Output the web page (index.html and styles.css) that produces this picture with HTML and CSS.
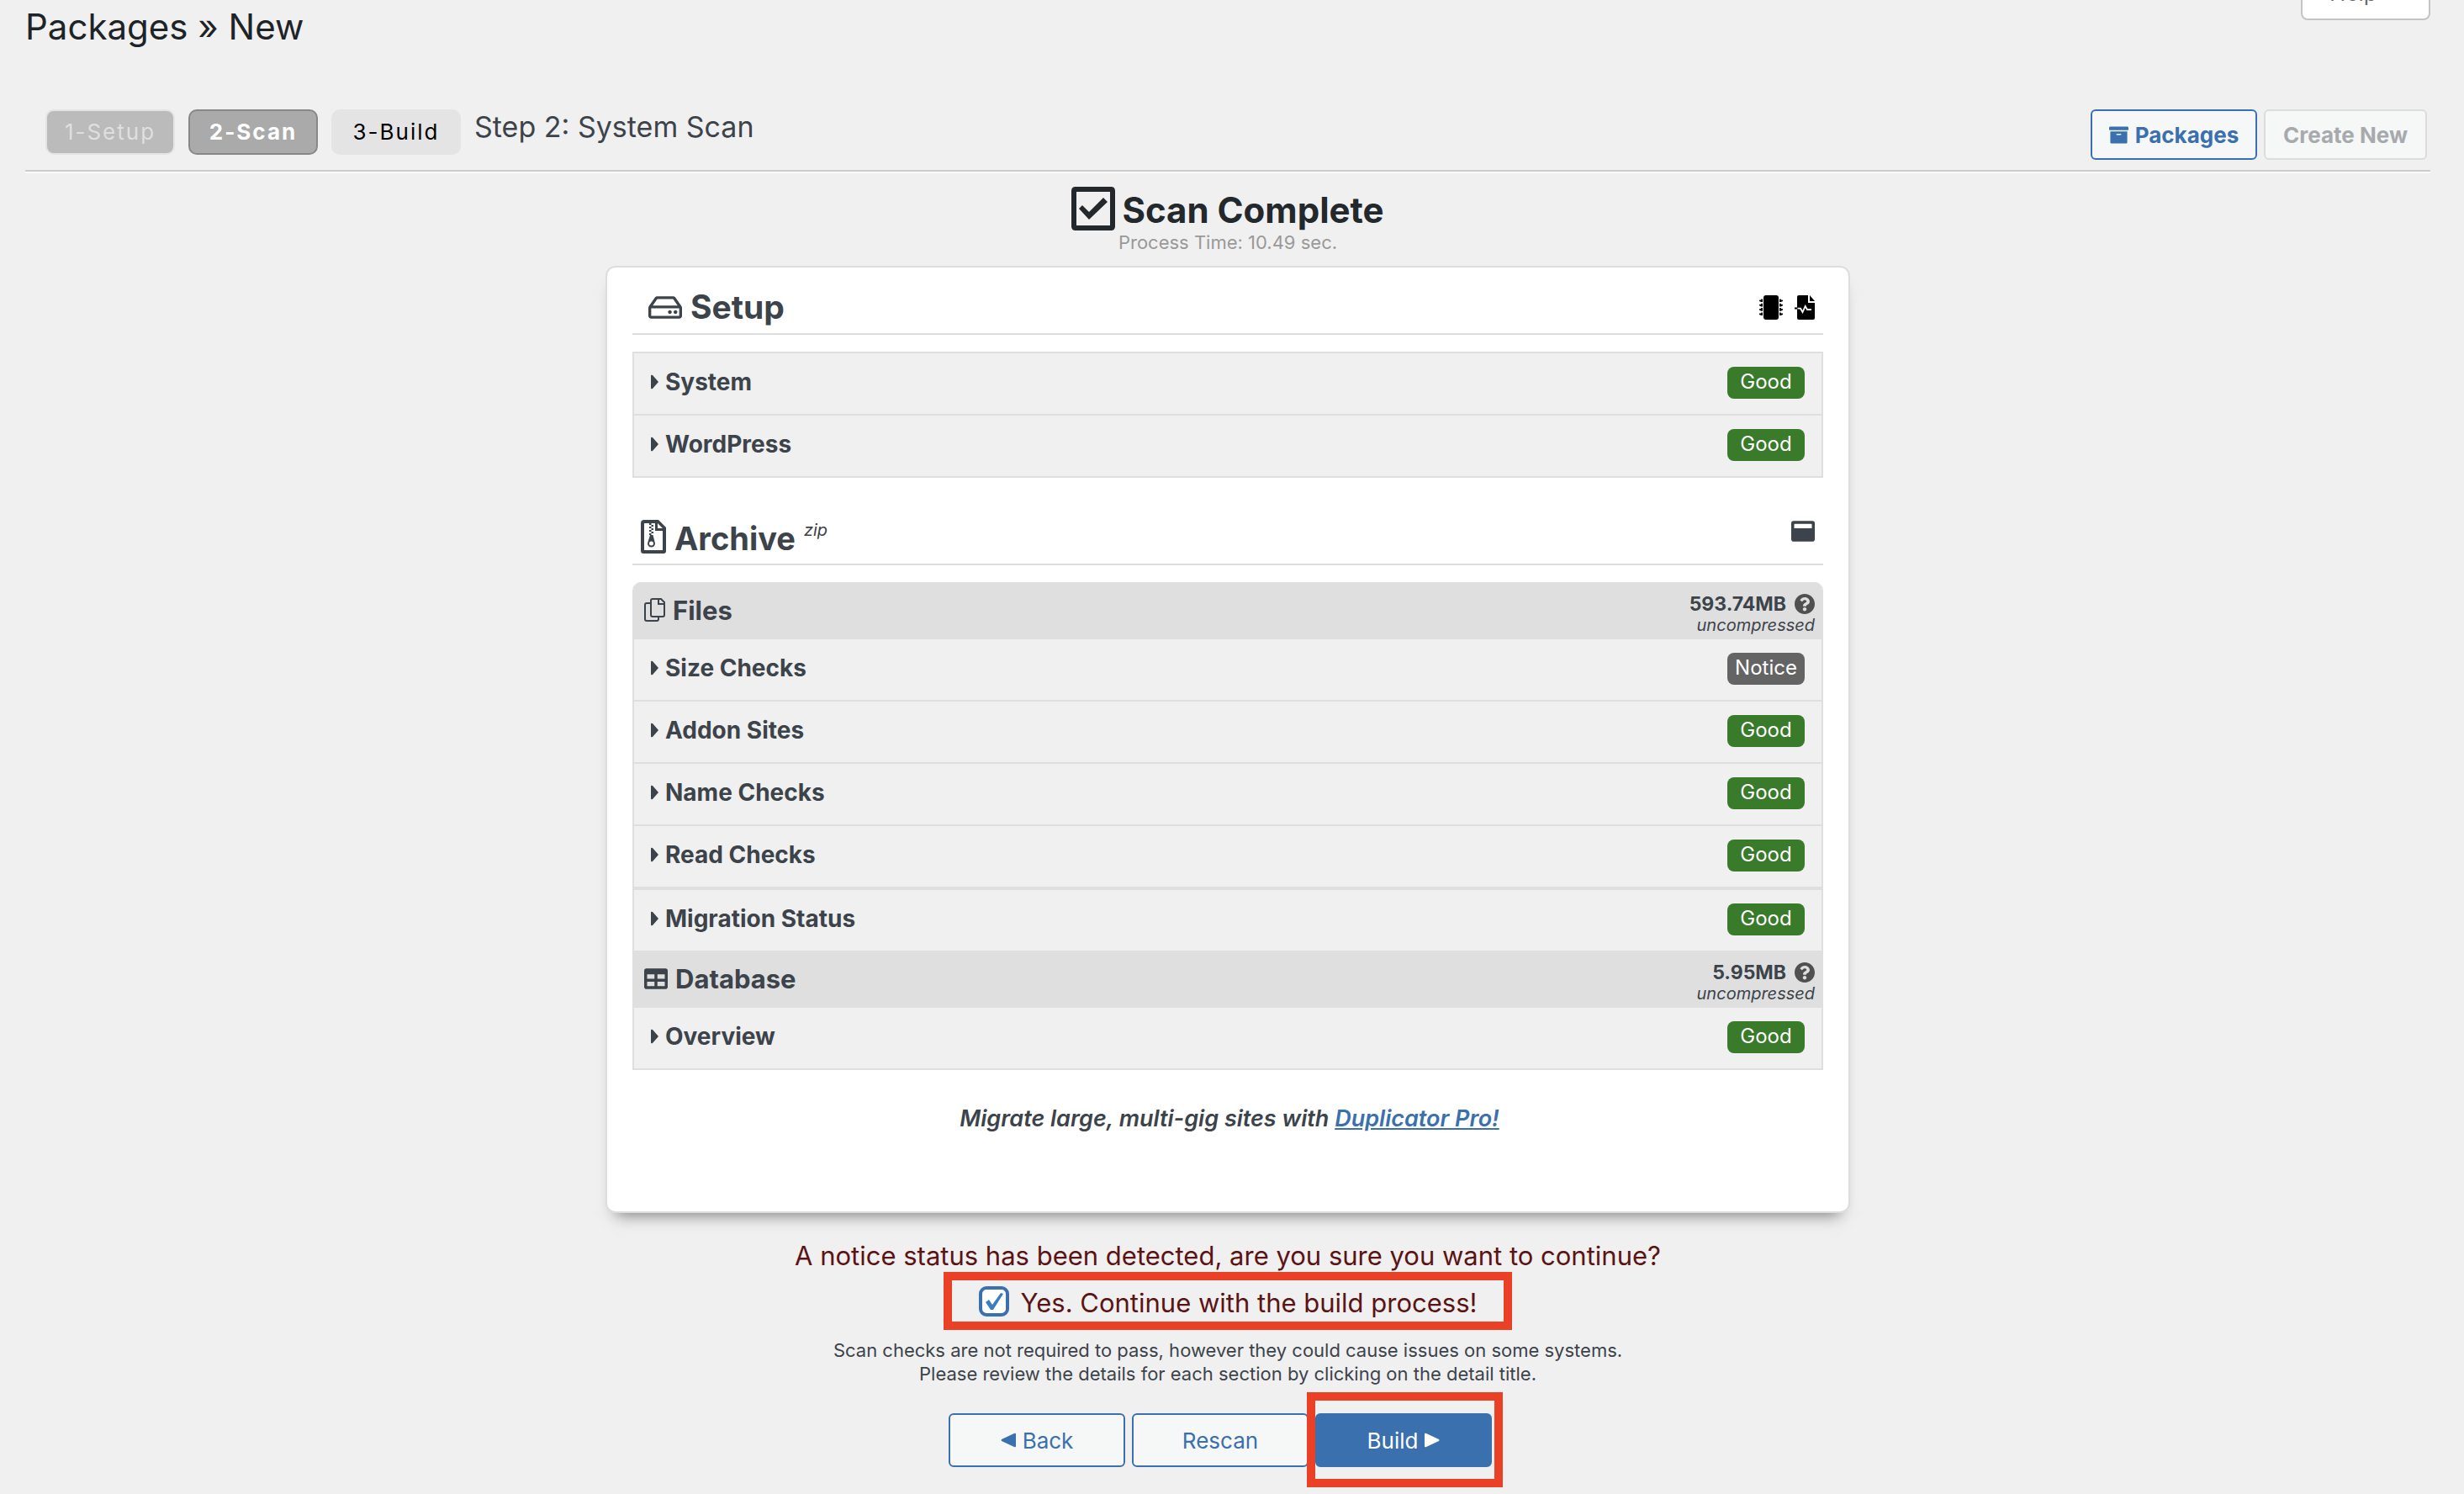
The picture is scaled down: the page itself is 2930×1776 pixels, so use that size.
FILE: index.html
```html
<!DOCTYPE html>
<html lang="en">
<head>
<meta charset="utf-8">
<title>Packages » New</title>
<link rel="stylesheet" href="styles.css">
</head>
<body>
<svg class="defs" aria-hidden="true">
  <symbol id="caret" viewBox="0 0 9 18"><path d="M0 2Q0 0 2 1L9 9 2 17Q0 18 0 16Z"/></symbol>
  <symbol id="help" viewBox="8 8 496 496"><path d="M504 256c0 136.997-111.043 248-248 248S8 392.997 8 256C8 119.083 119.043 8 256 8s248 111.083 248 248zM262.655 90c-54.497 0-89.255 22.957-116.549 63.758-3.536 5.286-2.353 12.415 2.715 16.258l34.699 26.31c5.205 3.947 12.621 3.008 16.665-2.122 17.864-22.658 30.113-35.797 57.303-35.797 20.429 0 45.698 13.148 45.698 32.958 0 14.976-12.363 22.667-32.534 33.976C247.128 238.528 216 254.941 216 296v4c0 6.627 5.373 12 12 12h56c6.627 0 12-5.373 12-12v-1.333c0-28.462 83.186-29.647 83.186-106.667 0-58.002-60.165-102-116.531-102zM256 338c-25.365 0-46 20.635-46 46 0 25.364 20.635 46 46 46s46-20.636 46-46c0-25.365-20.635-46-46-46z"/></symbol>
</svg>

<header class="page-head">
  <h1>Packages » New</h1>
  <button class="help-tab" type="button">Help</button>
</header>

<nav class="toolbar">
  <div class="steps">
    <span class="step step-done">1-Setup</span>
    <span class="step step-active">2-Scan</span>
    <span class="step">3-Build</span>
    <span class="step-title">Step 2: System Scan</span>
  </div>
  <div class="tools">
    <a class="tool" href="#packages"><svg width="23" height="21" viewBox="0 32 512 448"><path d="M32 448c0 17.700 14.300 32 32 32h384c17.700 0 32-14.300 32-32V160H32v288zm160-212c0-6.600 5.400-12 12-12h104c6.600 0 12 5.400 12 12v8c0 6.600-5.400 12-12 12H204c-6.600 0-12-5.400-12-12v-8zM480 32H32C14.300 32 0 46.300 0 64v48c0 8.800 7.200 16 16 16h480c8.800 0 16-7.200 16-16V64c0-17.700-14.300-32-32-32z"/></svg>Packages</a>
    <button class="tool" type="button" disabled>Create New</button>
  </div>
</nav>

<main>
  <div class="result">
    <h2><svg width="52" height="52" viewBox="0 0 52 52"><path fill-rule="evenodd" d="M5 0H47Q52 0 52 5V47Q52 52 47 52H5Q0 52 0 47V5Q0 0 5 0ZM6 6V46H46V6ZM9 26L13 22 21 30 38 13 43 18 21 39Z"/></svg><span>Scan Complete</span></h2>
    <p>Process Time: 10.49 sec.</p>
  </div>

  <section class="card">
    <div class="group-head group-setup">
      <h3><svg width="40" height="27" viewBox="0 64 576 384"><path d="M567.403 235.642L462.323 84.589A48 48 0 0 0 422.919 64H153.081a48 48 0 0 0-39.404 20.589L8.597 235.642A48.001 48.001 0 0 0 0 263.054V400c0 26.510 21.490 48 48 48h480c26.510 0 48-21.490 48-48V263.054c0-9.801-3-19.366-8.597-27.412zM153.081 112h269.838l77.913 112H75.168l77.913-112zM528 400H48V272h480v128zm-32-64c0 17.673-14.327 32-32 32s-32-14.327-32-32 14.327-32 32-32 32 14.327 32 32zm-96 0c0 17.673-14.327 32-32 32s-32-14.327-32-32 14.327-32 32-32 32 14.327 32 32z"/></svg>Setup</h3>
      <div class="group-icons dark">
        <svg width="28" height="29" viewBox="0 0 28 29"><rect x="5" y="0" width="18" height="29" rx="3"/><path d="M4 4.500v3.600H2.500L0 7V5.700L2 5.500 2.500 4.500ZM4 9.800v3.600H2.500L0 12.300V11L2 10.800 2.500 9.800ZM4 15.100v3.600H2.500L0 17.600v-1.300l2-.2.500-1ZM4 20.400V24H2.500L0 22.900v-1.300l2-.2.500-1ZM24 4.500v3.600h1.500L28 7V5.700l-2-.2-.5-1ZM24 9.800v3.600h1.500L28 12.300V11l-2-.2-.5-1ZM24 15.100v3.600h1.500l2.500-1.100v-1.300l-2-.2-.5-1ZM24 20.400V24h1.500l2.500-1.100v-1.300l-2-.2-.5-1Z"/></svg>
        <svg width="24" height="29" viewBox="0 0 24 29"><path d="M5 0H16V9H24V27Q24 29 22 29H5Q3 29 3 27V2Q3 0 5 0ZM18 0L24 7H18Z"/><path d="M0 15.500H4" stroke="#000" stroke-width="2"/><path class="line" d="M3.500 15.700H7L9.500 20 12.700 13 15 17H20" stroke="#fff" stroke-width="1.800"/></svg>
      </div>
    </div>
    <div class="checks">
      <div class="row"><button type="button"><svg width="9" height="18"><use href="#caret"/></svg>System</button><span class="badge">Good</span></div>
      <div class="row"><button type="button"><svg width="9" height="18"><use href="#caret"/></svg>WordPress</button><span class="badge">Good</span></div>
    </div>

    <div class="group-head group-archive">
      <h3><svg width="30" height="40" viewBox="0 0 30 40"><path fill-rule="evenodd" d="M4 0H21L30 9V37Q30 40 27 40H3Q0 40 0 37V4Q0 0 4 0ZM4 4V36H26V13H17V4ZM20 4V10H26Z"/><path d="M10 4h2.500v2H10zM12.500 6H15v2h-2.500zM10 8h2.500v2H10zM12.500 10H15v2h-2.500zM10 12h2.500v2H10zM12.500 14H15v2h-2.500zM10 16h2.500v2H10z"/><path fill-rule="evenodd" d="M11 18H14.500L17 28A4.500 4.500 0 1 1 8 28ZM12.500 25.500A2.500 2.500 0 1 0 12.500 30.500 2.500 2.500 0 1 0 12.500 25.500Z"/></svg><span>Archive</span><sup>zip</sup></h3>
      <div class="group-icons">
        <svg width="28" height="25" viewBox="0 32 512 448"><path d="M464 32H48C21.500 32 0 53.500 0 80v352c0 26.500 21.500 48 48 48h416c26.500 0 48-21.500 48-48V80c0-26.500-21.500-48-48-48zm-16 160H64v-84c0-6.600 5.400-12 12-12h360c6.600 0 12 5.400 12 12v84z"/></svg>
      </div>
    </div>
    <div class="checks checks-archive">
      <div class="band"><h4><svg class="line" width="25" height="28" viewBox="0 0 25 28" stroke="#3c434a" stroke-width="2"><path d="M11 1H20L24 5V20Q24 22 22 22H10Q8 22 8 20V3Q8 1 10 1ZM17 1V7H24M8 6H3Q1 6 1 8V25Q1 27 3 27H15Q17 27 17 25V22"/></svg>Files</h4>
        <div class="size"><strong>593.74MB <svg width="24" height="24"><use href="#help"/></svg></strong><em>uncompressed</em></div></div>
      <div class="row"><button type="button"><svg width="9" height="18"><use href="#caret"/></svg>Size Checks</button><span class="badge badge-notice">Notice</span></div>
      <div class="row"><button type="button"><svg width="9" height="18"><use href="#caret"/></svg>Addon Sites</button><span class="badge">Good</span></div>
      <div class="row"><button type="button"><svg width="9" height="18"><use href="#caret"/></svg>Name Checks</button><span class="badge">Good</span></div>
      <div class="row row-end"><button type="button"><svg width="9" height="18"><use href="#caret"/></svg>Read Checks</button><span class="badge">Good</span></div>
      <div class="row"><button type="button"><svg width="9" height="18"><use href="#caret"/></svg>Migration Status</button><span class="badge">Good</span></div>
      <div class="band"><h4><svg width="28" height="25" viewBox="0 32 512 448"><path d="M464 32H48C21.490 32 0 53.490 0 80v352c0 26.510 21.490 48 48 48h416c26.510 0 48-21.490 48-48V80c0-26.510-21.490-48-48-48zM224 416H64v-96h160v96zm0-160H64v-96h160v96zm224 160H288v-96h160v96zm0-160H288v-96h160v96z"/></svg>Database</h4>
        <div class="size"><strong>5.95MB <svg width="24" height="24"><use href="#help"/></svg></strong><em>uncompressed</em></div></div>
      <div class="row"><button type="button"><svg width="9" height="18"><use href="#caret"/></svg>Overview</button><span class="badge">Good</span></div>
    </div>
    <p class="promo">Migrate large, multi-gig sites with <a href="#pro">Duplicator Pro!</a></p>
  </section>

  <div class="confirm">
    <p class="warning">A notice status has been detected, are you sure you want to continue?</p>
    <div class="marked accept">
      <input type="checkbox" id="continue" checked>
      <label for="continue">Yes. Continue with the build process!</label>
    </div>
    <p class="note">Scan checks are not required to pass, however they could cause issues on some systems.<br>Please review the details for each section by clicking on the detail title.</p>
  </div>

  <div class="actions">
    <button type="button"><svg width="18" height="18" viewBox="0 0 18 18"><path d="M18 2V16Q18 18 16 17L1 10Q0 9 1 8L16 1Q18 0 18 2Z"/></svg>Back</button>
    <button type="button">Rescan</button>
    <div class="build"><button class="primary" type="button">Build<svg width="18" height="18" viewBox="0 0 18 18"><path d="M0 2V16Q0 18 2 17L17 10Q18 9 17 8L2 1Q0 0 0 2Z"/></svg></button></div>
  </div>
</main>
</body>
</html>
```
FILE: styles.css
```css
* { box-sizing: border-box; }
body {
  margin: 0;
  padding: 0 40px 0 30px;
  background: #f0f0f0;
  color: #3c434a;
  font-family: Inter, "Liberation Sans", sans-serif;
  font-size: 26px;
}
h1, h2, h3, h4, p { margin: 0; }
svg { flex: none; fill: currentColor; }
.line { fill: none; }
.defs { position: absolute; width: 0; height: 0; }
button { font: inherit; color: inherit; cursor: pointer; }
a { color: #3a70ad; }

/* Page heading */
.page-head { display: flex; justify-content: space-between; align-items: flex-start; height: 130px; }
h1 { color: #1d2327; font-size: 42px; font-weight: 400; line-height: 64px; }
.help-tab {
  width: 154px;
  height: 66px;
  margin-top: -42px;
  padding: 0 0 0 32px;
  text-align: left;
  color: #646970;
  background: #fff;
  border: 2px solid #c3c4c7;
  border-radius: 8px;
}

/* Wizard steps and tools */
.toolbar { display: flex; justify-content: space-between; align-items: flex-start; height: 76px; padding: 0 4px 0 24px; border-bottom: 2px solid #fafafa; box-shadow: inset 0 -2px #ccc; }
.steps { display: flex; gap: 16px; }
.step {
  width: 154px;
  height: 54px;
  line-height: 50px;
  text-align: center;
  letter-spacing: 2px;
  color: #000;
  background: #e4e4e4;
  border: 2px solid #e4e4e4;
  border-radius: 10px;
}
.step-done { color: #dfdfdf; background: #bbb; }
.step-active { color: #fff; background: #aaa; border-color: #888; font-weight: 700; }
.step-title { font-size: 34px; line-height: 42px; }
.tools { display: flex; gap: 8px; }
.tool {
  display: flex;
  align-items: center;
  justify-content: center;
  gap: 8px;
  width: 198px;
  height: 60px;
  padding: 0;
  font-weight: 700;
  text-decoration: none;
  color: #3a70ad;
  background: #f6f7f7;
  border: 2px solid #3a70ad;
  border-radius: 6px;
}
.tool:disabled { width: 194px; color: #a7aaad; border-color: #dcdcde; }

/* Scan result */
.result { height: 110px; padding-top: 16px; text-align: center; }
.result h2 { display: flex; justify-content: center; align-items: center; gap: 8px; color: #23282d; font-size: 42px; line-height: 52px; }
.result h2 span { padding-top: 4px; line-height: 48px; }
.result p { color: #999; font-size: 22px; line-height: 28px; }

.card {
  width: 1480px;
  margin: 0 auto;
  padding: 14px 30px 90px;
  background: #fff;
  border: 2px solid #ddd;
  border-radius: 12px;
  box-shadow: 0 14px 18px -12px #777;
}
.group-head { display: flex; justify-content: space-between; height: 66px; padding-right: 10px; border-bottom: 2px solid #ddd; }
.group-head h3 { display: flex; align-items: center; gap: 10px; font-size: 39px; line-height: 48px; }
.group-setup { padding-left: 19px; }
.group-archive { padding-left: 10px; margin-top: 38px; }
.group-archive h3 { height: 64px; font-size: 38px; }
.group-archive h3 span { padding-top: 4px; }
.group-head sup { align-self: flex-start; padding-top: 12px; font-size: 20px; font-weight: 400; font-style: italic; line-height: 24px; }
.group-icons { display: flex; align-items: flex-start; gap: 14px; padding-top: 13px; }
.group-setup h3, .group-setup .group-icons { padding-top: 0; height: 66px; align-items: center; }
.dark { color: #000; }

.checks { margin-top: 20px; border: 2px solid #dfdfdf; background: #f0f0f0; }
.checks-archive { border-top: 0; border-radius: 10px 10px 0 0; overflow: hidden; }
.row { display: flex; align-items: center; justify-content: space-between; height: 74px; padding: 0 20px 2px; border-bottom: 2px solid #dfdfdf; }
.row:last-child, .row:has(+ .band) { height: 72px; border-bottom: 0; }
.row-end { height: 76px; border-bottom-width: 4px; }
.row button { display: flex; align-items: center; gap: 8px; padding: 0 0 2px; border: 0; background: none; font-size: 28px; font-weight: 700; }
.badge { width: 92px; height: 38px; line-height: 36px; border-radius: 8px; text-align: center; font-size: 24px; color: #fff; background: #3a7a2b; }
.badge-notice { background: #646464; }
.band { display: flex; justify-content: space-between; height: 68px; padding: 0 8px 0 12px; background: #dfdfdf; }
.band h4 { display: flex; align-items: center; gap: 9px; padding-bottom: 2px; font-size: 31px; font-weight: 700; }
.size { display: flex; flex-direction: column; align-items: flex-end; padding-top: 12px; }
.size strong { display: flex; align-items: center; gap: 10px; font-size: 23px; line-height: 28px; }
.size svg { color: #505050; }
.size em { font-size: 20px; line-height: 22px; }
.promo { margin-top: 38px; padding-left: 4px; text-align: center; font-size: 27px; font-weight: 600; font-style: italic; line-height: 40px; }

/* Confirmation */
.confirm { padding-top: 32px; text-align: center; }
.warning { color: #5c1313; font-size: 31px; line-height: 38px; }
.marked { border: 10px solid #ea4025; }
.accept { display: flex; align-items: center; justify-content: center; gap: 14px; width: 676px; height: 69px; margin: 0 auto; color: #5c1313; font-size: 31px; }
.accept label { padding-top: 3px; }
.accept input {
  appearance: none;
  width: 36px;
  height: 36px;
  margin: 0;
  border: 4px solid #3a70ad;
  border-radius: 9px;
  background: #fff url("data:image/svg+xml,%3Csvg xmlns='http://www.w3.org/2000/svg' viewBox='0 0 28 28'%3E%3Cpath fill='%233a7dc4' d='M4 15l4-3 4 6L22 4l3 1L13 24h-3z'/%3E%3C/svg%3E") center / 28px no-repeat;
}
.note { margin-top: 10px; font-size: 22px; line-height: 28px; }

.actions { display: flex; justify-content: center; gap: 8px; padding: 33px 18px 24px 0; }
.actions button {
  display: flex;
  align-items: center;
  justify-content: center;
  gap: 8px;
  width: 210px;
  height: 64px;
  padding: 0;
  color: #3a70ad;
  background: #f6f7f7;
  border: 2px solid #3a70ad;
  border-radius: 6px;
}
.actions .primary { color: #fff; background: #3a70ad; }
.build { position: relative; }
.build::after { content: ""; position: absolute; inset: -25px -13px -24px -10px; border: 10px solid #ea4025; pointer-events: none; }
```
